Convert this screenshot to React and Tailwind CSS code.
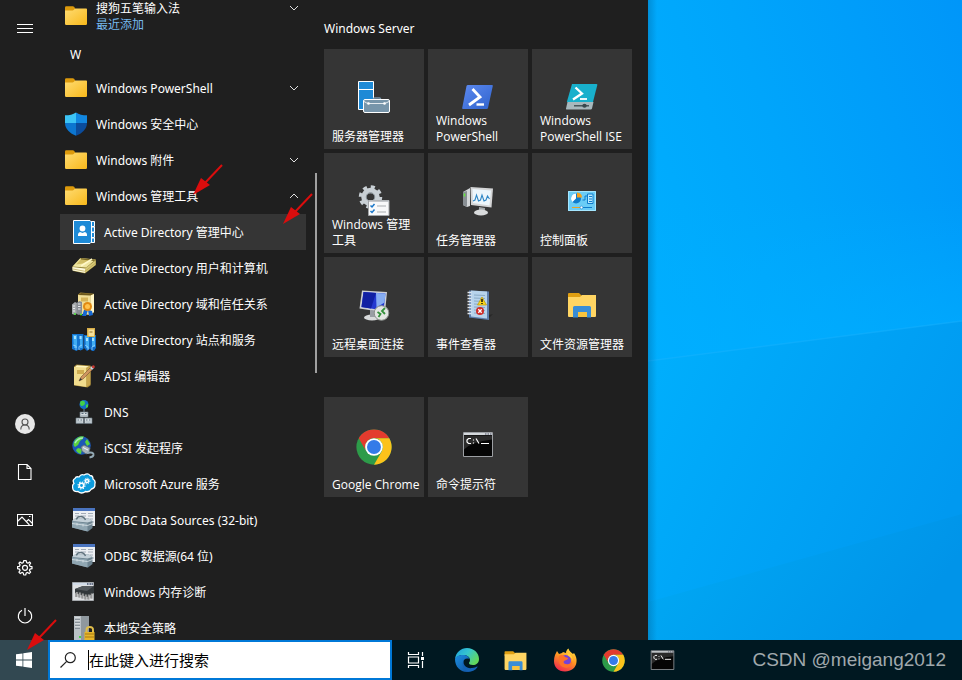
import React from "react";

const Svg = ({ size = 24, box = 24, children }) => (
  <svg width={size} height={size} viewBox={`0 0 ${box} ${box}`} aria-hidden="true" className="block shrink-0" fill="none">
    {children}
  </svg>
);

/* ---------- program list icons ---------- */

const Folder = () => (
  <Svg>
    <defs>
      <linearGradient id="folder" x1="0" y1="0" x2="1" y2="1">
        <stop offset="0" stopColor="#ffdc73" />
        <stop offset="1" stopColor="#f8b81a" />
      </linearGradient>
    </defs>
    <path d="M1 3.500q0-1.300 1.200-1.300h6.600q.8 0 1.300.6L11.500 5v3H1z" fill="#dd9a0c" />
    <path d="M1 6.500h7.500q.8 0 1.400-.7l1-1.100q.3-.3.900-.3h10.400q.8 0 .8.900v14.500q0 1.200-1.200 1.200H2.200Q1 21 1 19.800z" fill="url(#folder)" />
  </Svg>
);

const Shield = () => (
  <Svg>
    <path d="M12 0.500C9 2.500 5.500 3.300 1 3.300V11h11z" fill="#3cc4f5" />
    <path d="M12 0.500c3 2 6.500 2.800 11 2.800V11H12z" fill="#1287e0" />
    <path d="M1 11c0 6 5 10.500 11 12.700V11z" fill="#0c76d0" />
    <path d="M23 11c0 6-5 10.500-11 12.700V11z" fill="#0b4c9c" />
  </Svg>
);

const ContactBook = () => (
  <Svg>
    <path d="M19 1.500h3.500v5H19zM19 7h3.500v5H19zM19 12.500h3.500v5H19zM19 18h3.500v4.500H19z" fill="#1e8ad6" stroke="#fff" strokeWidth="1" />
    <path d="M1.500.5h16.500l1.500 1.500v20l-1.500 1.500H1.500z" fill="#1e8ad6" stroke="#fff" />
    <circle cx="10.500" cy="8.500" r="2.900" fill="#fff" />
    <path d="M6 16v-1.500q0-2 2-2.500l2.500 1 2.500-1q2 .5 2 2.500V16z" fill="#fff" />
  </Svg>
);

const FlatBook = () => (
  <Svg>
    <path d="M0 11 8 2.500 24 3.500v5.500L13 17.500 1 15z" fill="#8f7f34" />
    <path d="M.5 10.500 8.500 2 23.500 3.500l-9.500 8z" fill="#efe6a2" />
    <path d="M4 8.500 9 3l10 1-8 3.500z" fill="#d0bd67" />
    <path d="m8.500 2 15 1.500L22 5 9 3.400z" fill="#7b6a25" />
    <path d="m9 10 11-7" stroke="#fff8c9" strokeWidth="1.500" />
    <path d="M.5 11v3.500L13 17v-4.500z" fill="#fdf9dd" />
    <path d="M13 12.500 23.500 4.500V9L13 17z" fill="#d7c877" />
    <path d="m1 13 12 2.300 10-7.800" stroke="#b5a450" strokeWidth=".7" />
  </Svg>
);

const UprightBook = () => (
  <>
    <path d="M6 2.500 8.500.5 22 1.800V20l-2.500 3L6 21z" fill="#a58938" />
    <path d="M6 3h12.500v20L6 21.500z" fill="#f1df98" />
    <path d="M18.500 3 22 2v18l-3.500 3z" fill="#fff5c5" />
    <path d="M6.500 3 9 1l12 1-2.500 1.500z" fill="#6d581c" />
    <path d="M9 5.500h7v4H9z" fill="#d5b45a" />
  </>
);

const TrustBook = () => (
  <Svg>
    <UprightBook />
    <path d="m12 18 4 0-2 6h-4zM16 18l4 1 1 4-4 1z" fill="#1668d4" />
    <circle cx="15.500" cy="14.500" r="4.500" fill="#e28a12" />
    <circle cx="15.500" cy="14.500" r="2.500" fill="#ffc24e" />
    <path d="M0 12.500 3 10l2 1v10l-2 2-3-1z" fill="#a5a8ac" />
    <path d="M4.500 11 7.500 9 10 10v11.500L7 23l-2.500-1z" fill="#888c93" />
    <path d="M1 14h2M1 16.500h2M1 19h2M6 12h2.500M6 14.500h2.500M6 17h2.500" stroke="#e9ebed" />
    <path d="M2 22h2M8 22.500h2" stroke="#48e334" strokeWidth="1.500" />
  </Svg>
);

const Sites = () => (
  <Svg>
    <path d="M0 6h11.500v15l-3 1.500-2-1-2 1.500L0 21z" fill="#1474cf" />
    <path d="M12 7h12v13l-2 3h-2l-2-2-3 2-3-3z" fill="#0f69c4" />
    <path d="M1 7h4v13H2zM13 8h4v13l-3-1zM8 8h2.500v12H8zM20 9h3v10h-3z" fill="#41adf2" />
    <path d="M2 8h2v3H2zM7.500 8h2v3h-2zM14 10h2v3h-2zM20 10h2v3h-2z" fill="#a4e2ff" />
    <path d="m1 17 3 1v4M10 17l-3 1.500V22M13 17l3 2v3M23 17l-3 2v3" stroke="#9bd4ff" strokeWidth=".8" />
    <path d="M15 0h8v9h-8z" fill="#d8ae48" />
    <path d="M16.500 1.500H22V8h-5.500z" fill="#f7e19a" />
    <path d="M17.500 4h3" stroke="#92702a" />
  </Svg>
);

const AdsiEdit = () => (
  <Svg>
    <path d="M2 2.500 4.500.5 18.500 1.500v20l-3 2L2 21.500z" fill="#a18535" />
    <path d="M2 3h12.500v20L2 21z" fill="#f1dc8d" />
    <path d="M14.500 3 18.500 2v18.500L14.500 23z" fill="#c8a54c" />
    <path d="m3 3 2-1.800 12 1-2.500 1.300z" fill="#fff5c0" />
    <path d="M5 6h7v4H5z" fill="#d0ad51" />
    <path d="m7 17 2-4 9-9 2 2-9 9z" fill="#cf9660" stroke="#755034" strokeWidth=".6" />
    <path d="m7 17 1.500-3L10 15.500z" fill="#333" />
    <path d="m18 4 2 2 2-2-2-2z" fill="#c7d3df" />
    <circle cx="21.300" cy="2.700" r="1.500" fill="#c93a34" />
  </Svg>
);

const Dns = () => (
  <Svg>
    <circle cx="12" cy="4.500" r="4.500" fill="#146fc6" />
    <path d="M9 1q4-1 4 2t-4 3q-2-3 0-5M14 5l2-1v3l-2 1z" fill="#43cf48" />
    <path d="M12 9v3" stroke="#718d9d" />
    <path d="M8 12h8v5H8zM4 18h7.500v5.500H4zM12.500 18H20v5.500h-7.500z" fill="#d3dade" stroke="#65727c" strokeWidth=".7" />
    <path d="M9.500 13.500h2m1.500 0h1.500M5.500 20H7m1.500 0H10m4 0h1.500m1.500 0h1.500" stroke="#5d6f7e" strokeWidth="1.200" />
    <path d="M9 15.700h6M5 22h5.500m3 0H19" stroke="#9ba8b1" strokeWidth=".8" />
  </Svg>
);

const Iscsi = () => (
  <Svg>
    <circle cx="9.500" cy="9.500" r="9.300" fill="#1c58b7" />
    <path d="M3 4q4-5 9-3.500Q11 4 8 5L6 9 3 11q-3-2 0-7M6 12l4 1-1 5q-4-1-5-4zM15 3l3 5-3 2-2-4z" fill="#5bd23c" />
    <path d="M3 7q3-5 8-5" stroke="#c7f6f3" strokeWidth="1.500" opacity=".7" />
    <path d="m9 11 3-2 6 3-1 5-3 1-4-3z" fill="#a7b4bd" stroke="#58646c" strokeWidth=".7" />
    <path d="M11 11.500 16 14" stroke="#f4f7fa" />
    <path d="M15 17q7-1.500 6.500 2-.5 2-4 2.500" stroke="#93a9b4" strokeWidth="2" />
  </Svg>
);

const Azure = () => (
  <Svg>
    <path d="M6 19.500q-5 .5-5.300-3.500Q0 13 2 11.500 0 8 3 6.500 4 4 7 5q2-3.500 5-2 4-2.500 6 .5 3 0 3 3.500 3 2 1.800 5 .7 4-3.300 5-2 3.500-6 2.500-4 3-7.500 0z" fill="#0c9bdc" stroke="#fff" strokeWidth="1.300" />
    <circle cx="9.500" cy="13.500" r="2.200" stroke="#fff" strokeWidth="1.600" />
    <circle cx="9.500" cy="13.500" r="3.500" stroke="#fff" strokeWidth="1.100" strokeDasharray="1.400 1.350" />
    <circle cx="15" cy="9" r="1.600" stroke="#fff" strokeWidth="1.500" />
    <circle cx="15" cy="9" r="2.800" stroke="#fff" strokeWidth="1" strokeDasharray="1.200 1" />
  </Svg>
);

const Odbc = () => (
  <Svg>
    <path d="M1 0h22v18H1z" fill="#eceff3" />
    <path d="M1 0h22v3H1z" fill="#4a74bf" />
    <path d="M3 5.500h4m2 0h5m2 0h5M3 8h4m2 0h5m2 0h5M18 11h3M20 14h2" stroke="#a3acb8" />
    <path d="m0 13 3-2.500h14l3.500 2.500v7L16 23.500 0 19.500z" fill="#6d8390" />
    <path d="m0 13 3-2.500h14l3.500 2.500-5 1.500z" fill="#c3d0d8" />
    <path d="M0 13.500 15.500 15.500v8L0 19.500z" fill="#90a6b2" />
    <path d="M4.500 11.500q.5-3 4-3t5 3.500" stroke="#5f727d" strokeWidth="1.400" />
    <path d="m0 15.500 15.500 2 5-2M5 15v2.500m6-1.500v2.500" stroke="#dbe3e8" strokeWidth=".8" />
  </Svg>
);

const Memory = () => (
  <Svg>
    <path d="M.5 2.500h21v18H.5z" fill="#dfe1e3" stroke="#a5a9ad" />
    <path d="M1 3h20v2H1z" fill="#d2dce9" />
    <path d="M15 4h1.500m1 0H19m.5 0H21" stroke="#48516a" strokeWidth="1.500" />
    <path d="m3 9 8-3h11v7l-7 4-12-4z" fill="#33383b" />
    <path d="m3 9 8-3h11l-7 5z" fill="#54595d" />
    <path d="M4.500 12v5m3-4.500v5m3-4v5m3-4v5m3-5v5m3-6v5" stroke="#666" strokeWidth="2" />
    <path d="M5 12v5m3-4.500v5m3-4v5m3-4v5m3-5v5m3-6v5" stroke="#f6f6f6" strokeWidth=".7" />
  </Svg>
);

const Security = () => (
  <Svg>
    <path d="M2 0h11v24H2z" fill="#bac1c6" />
    <path d="M9 0h8v22l-5 2H9z" fill="#8f989e" />
    <path d="M3 3h5M3 6h5M3 9h5M3 12h5" stroke="#59646c" />
    <path d="M3 2h5M3 5h5M3 8h5M3 11h5" stroke="#fff" strokeWidth=".8" />
    <path d="M7 21h2" stroke="#48d447" strokeWidth="2" />
    <path d="M14.500 16v-2q0-3 3.300-3t3.200 3v2" stroke="#dfbd4a" strokeWidth="2" />
    <path d="M12.500 16h10v8h-10z" fill="#e7b62a" />
    <path d="M13 18h9M13 21h9" stroke="#a97b13" />
  </Svg>
);

/* ---------- tile icons ---------- */

const ServerManager = () => (
  <Svg size={32} box={32}>
    <path d="M.5.5h15v28H.5z" fill="#1e8ad6" stroke="#fff" />
    <path d="M1 8.500h14" stroke="#fff" />
    <path d="M15.500 19v-1q0-1 1-1h5q1 0 1 1v1" stroke="#7795aa" strokeWidth="1.500" />
    <rect x="5.500" y="18.500" width="26" height="13" rx="1.500" fill="#7795aa" stroke="#fff" />
    <path d="M6 20.500q3 2 5 2h14q3 0 6-2" stroke="#fff" strokeWidth=".8" />
    <circle cx="10.500" cy="22.500" r="1.300" fill="#fff" />
    <circle cx="26.500" cy="22.500" r="1.300" fill="#fff" />
  </Svg>
);

const PowerShell = () => (
  <Svg size={32} box={32}>
    <defs>
      <linearGradient id="psBlue" x1="0" y1="0" x2="1" y2="1">
        <stop offset="0" stopColor="#5d8af0" />
        <stop offset="1" stopColor="#2f62cc" />
      </linearGradient>
    </defs>
    <path d="M6 4h24q1 0 .8 1L26 27q-.3 1-1.300 1H1q-1 0-.8-1L4.500 5Q4.800 4 6 4z" fill="url(#psBlue)" />
    <path d="m10.500 8 7.500 8-11 8" stroke="#fff" strokeWidth="2.800" />
    <path d="M14.500 23.500H22" stroke="#fff" strokeWidth="2.400" />
  </Svg>
);

const PowerShellIse = () => (
  <Svg size={32} box={32}>
    <path d="M6 3h24.500q1 0 .8 1L27 21H.8z" fill="#18b0cc" />
    <path d="M1.500 21H27.500l-1.500 6.500q-.3 1-1.300 1H1q-1.200 0-1-1z" fill="#a7b8bd" />
    <path d="m9.500 6.500 6.500 6L7 18.500" stroke="#fff" strokeWidth="2.300" />
    <path d="M14 18h7" stroke="#fff" strokeWidth="1.800" />
    <path d="M8 24.800h15" stroke="#37474c" strokeWidth="1.300" />
    <ellipse cx="18.500" cy="24.800" rx="2.200" ry="2" fill="#37474c" />
  </Svg>
);

const AdminTools = () => (
  <Svg size={32} box={32}>
    <g stroke="#c9d0d5">
      <circle cx="12.500" cy="12" r="6.500" strokeWidth="5.500" />
      <circle cx="12.500" cy="12" r="10" strokeWidth="3.500" strokeDasharray="4 3.850" />
    </g>
    <circle cx="12.500" cy="12" r="4.200" stroke="#7d868c" />
    <path d="M10.500 15.500h20.500v15H10.500z" fill="#f8f9fa" stroke="#a2a5a8" />
    <path d="M11 15.500h20v1.500H11z" fill="#c5c8cc" />
    <path d="m12.500 20.500 1.500 1.500 2.500-3M12.500 26l1.500 1.500 2.500-3" stroke="#1976c8" strokeWidth="1.500" />
    <path d="M19 21h9M19 27h9" stroke="#a8acaf" />
  </Svg>
);

const TaskManager = () => (
  <Svg size={32} box={32}>
    <path d="m1 7 7-4v18l-3 1-4-2z" fill="#d3d6d8" />
    <path d="M1 7 5 6v16l-4-2z" fill="#888e93" />
    <path d="M2.500 8.500v3" stroke="#63e635" strokeWidth="1.500" />
    <path d="m8.500 2 22.500 1.500-1.500 19L9 20z" fill="#d4d5d6" />
    <path d="m10.500 4 18.500 1.500-1.500 15-16.500-2.500z" fill="#edf6fb" />
    <path d="m11 16 2-1 1.500-5 2 6 2-1 1.500-5 2 6 2-1 1.500-4 2 3" stroke="#2f86c4" strokeWidth="1.100" />
    <path d="m17 22 6 1v4h-6z" fill="#a0a4a6" />
    <ellipse cx="19" cy="27.500" rx="7" ry="3" fill="#d9dbdc" />
  </Svg>
);

const ControlPanel = () => (
  <Svg size={32} box={32}>
    <path d="M2 6h28v20H2z" fill="#6accf6" />
    <path d="M2.500 6.500h27v19h-27z" stroke="#a5e6ff" />
    <circle cx="10" cy="13.500" r="5" fill="#0f7ccc" />
    <path d="M10 13.500 6.500 17A5 5 0 0 1 10 8.500z" fill="#fff" />
    <path d="M11 7.500q5 .5 5 5h-5z" fill="#f6a11c" />
    <path d="M16.500 15H19v-4h2" stroke="#0f7ccc" />
    <path d="M21.500 9h5.500v9.500h-5.500z" fill="#b8eaff" stroke="#0f7ccc" />
    <path d="M23 11.500h3m-3 2.500h3m-3 2.500h3" stroke="#0f7ccc" />
    <path d="M6 22.500h9" stroke="#e7a428" />
    <path d="M16 22.500h10" stroke="#0f7ccc" />
    <circle cx="15.500" cy="22.500" r="1.400" fill="#fff" stroke="#0f7ccc" strokeWidth=".6" />
  </Svg>
);

const RemoteDesktop = () => (
  <Svg size={32} box={32}>
    <ellipse cx="14" cy="28.500" rx="8" ry="3" fill="#d8dadb" />
    <path d="m12 21 6 1-1 6h-5z" fill="#999ea4" />
    <path d="M4 1.500 29 3l-2 20.500L1.500 19.500z" fill="#cdd0d6" />
    <path d="M5.500 3 27.500 4.500l-2 17L3.500 18z" fill="#2439d0" />
    <path d="M5.500 3 18 4l-5 15.500L3.500 18z" fill="#1120a3" />
    <path d="m18 4 9.500.5-1 9-8 5z" fill="#86adf3" />
    <circle cx="23.500" cy="24" r="7.300" fill="#e3e6e3" stroke="#8b908d" />
    <path d="m19.500 23 3 2-2 3M27 19l-3 3 3 3" stroke="#33903a" strokeWidth="1.800" />
  </Svg>
);

const EventViewer = () => (
  <Svg size={32} box={32}>
    <path d="m23 27 8-2-4 4-12 2z" fill="#272727" />
    <path d="m7 1.500 20 1v28.500L7 28.500z" fill="#5e7fae" />
    <path d="m9 1.500 16 1v27L9 27.500z" fill="#b7d3ec" />
    <path d="m12 6 11 .5M12 9l11 .5M12 12l11 .5M12 15l11 .5M12 18l11 .5M12 21l11 .5M12 24l11 .5" stroke="#89aac6" />
    <path d="M5.500 3.500h4m-4 3h4m-4 3h4m-4 3h4m-4 3h4m-4 3h4m-4 3h4m-4 3h4" stroke="#e1e6eb" strokeWidth="1.300" />
    <path d="m20 8 4.500 8h-9z" fill="#f9d51b" stroke="#c29a00" strokeWidth=".7" />
    <path d="M20 10v3m0 1v1" stroke="#111" strokeWidth="1.500" />
    <circle cx="18" cy="22" r="4" fill="#cf2c28" />
    <path d="m16.300 20.300 3.400 3.400m0-3.400-3.400 3.400" stroke="#fff" strokeWidth="1.300" />
  </Svg>
);

const Explorer = ({ size = 32 }) => (
  <Svg size={size} box={32}>
    <path d="M2 5q0-1 1-1h10l3 3v3H2z" fill="#e09f12" />
    <path d="M2 8h12l2-2h14v21q0 1-1 1H3q-1 0-1-1z" fill="#ffd563" />
    <path d="M7 28.500V18.500Q7 17 8.500 17h15q1.500 0 1.500 1.500v10h-4V23h-9v5.500z" fill="#398dd6" />
    <path d="M12 23h9v5h-9z" fill="#f7c33e" />
  </Svg>
);

const Chrome = ({ size = 36 }) => (
  <Svg size={size} box={48}>
    <circle cx="24" cy="24" r="23.500" fill="#2d9b49" />
    <path d="M3.650 12.250A23.500 23.500 0 0 1 44.350 12.250H24A11.750 11.750 0 0 0 13.800 29.900z" fill="#e33b2e" />
    <path d="M44.350 12.250A23.500 23.500 0 0 1 24 47.500L34.200 29.900A11.750 11.750 0 0 0 24 12.250z" fill="#fcc21b" />
    <circle cx="24" cy="24" r="11.800" fill="#fff" />
    <circle cx="24" cy="24" r="9.300" fill="#347be8" />
  </Svg>
);

const Terminal = ({ size = 32 }) => (
  <Svg size={size} box={32}>
    <path d="M1.500 3.500h29v24h-29z" fill="#050505" stroke="#9c9fa3" />
    <path d="M2 4h28v2H2z" fill="#d4d8dc" />
    <path d="M23 5h1.500m1 0H27m1 0h1.500" stroke="#4a4c60" />
    <path d="M2 6.500h28v4Q10 12.500 2 20.500z" fill="#fff" opacity=".15" />
    <path d="M9 9.500H6.500L5 11v2l1.500 1.500H9m2.500-4v1m0 2v1m2.500-5 3 5m2 0h8" stroke="#fff" strokeWidth="1.200" />
  </Svg>
);

/* ---------- taskbar icons ---------- */

const Edge = () => (
  <Svg>
    <defs>
      <linearGradient id="edgeTop" x1="0" y1="0" x2="1" y2=".6">
        <stop offset="0" stopColor="#1ca0df" />
        <stop offset=".5" stopColor="#36c5cf" />
        <stop offset="1" stopColor="#62d85a" />
      </linearGradient>
      <linearGradient id="edgeLow" x1="0" y1="0" x2="1" y2="1">
        <stop offset="0" stopColor="#1b8ee0" />
        <stop offset="1" stopColor="#104d9c" />
      </linearGradient>
    </defs>
    <path d="M0 11C1 4 6 0 12 0c7 0 12 5 12 11 0 4-3 6-6 6-3 0-4-1-4-2 0-1 1-1 1-3 0-3-3-5-7-5-4 0-7 2-8 4z" fill="url(#edgeTop)" />
    <path d="M0 11c1-3 4-4 8-4 4 0 6 2 6.500 4C11 9.500 8 12 8 15c0 5 5 8 10 7-2 1.500-4 2-6 2C5 24 0 18.500 0 11z" fill="url(#edgeLow)" />
    <path d="M9 12c-2 5 3 9 8 8 2 0 4-1 5-1.500.6-.2.800.1.500.5C20 23 16 24 14 23.500 8 22.500 6 16 9 12z" fill="#1462b5" />
  </Svg>
);

const Firefox = () => (
  <Svg>
    <defs>
      <linearGradient id="fox" x1=".8" y1="0" x2=".3" y2="1">
        <stop offset="0" stopColor="#ffe344" />
        <stop offset=".45" stopColor="#ff9822" />
        <stop offset="1" stopColor="#f0284e" />
      </linearGradient>
    </defs>
    <path d="M2 7 4 3l2 3 3-1 1-1 3 1c0-2 1-3.500 2.500-4.500C16 3 18 4 20 6l1-1c2 3 3 6 2.500 9C23 20 18 23.500 12 23.500 5 23.500 1 19 1 13c0-2 .3-4 1-6z" fill="url(#fox)" />
    <circle cx="12.500" cy="12.500" r="5.500" fill="#7542d8" />
    <path d="M6 8c2-2 5-1 6 1l3 1c0 2-3 2-4 3s0 3 2 3c3 1 5-1 6-3 0 6-5 8-9 6-3-1-5-5-4-11z" fill="#ff7128" />
    <path d="M14 5c4 1 6 4 5.500 8-.5-3-2-4-4-5z" fill="#ffcf3d" />
  </Svg>
);

const TaskView = () => (
  <Svg size={20} box={20}>
    <path d="M2.500 2v2.500h10V2M2.500 18v-2.500h10V18M2.500 7h10v6h-10zM16.500 2v4m0 5v7" stroke="#fff" strokeWidth="1.200" />
    <path d="M15 7h3v3h-3z" fill="#fff" />
  </Svg>
);

const WindowsLogo = () => (
  <Svg size={16} box={16}>
    <path d="M0 2.300 6.500 1.400v6.100H0zM7.300 1.300 16 0v7.500H7.300zM0 8.400h6.500v6.200L0 13.700zM7.300 8.400H16V16l-8.700-1.300z" fill="#fff" />
  </Svg>
);

/* ---------- rail icons ---------- */

const Menu = () => (
  <Svg size={16} box={16}>
    <path d="M0 4.500h16M0 8.500h16M0 12.500h16" stroke="#fff" />
  </Svg>
);

const User = () => (
  <Svg size={20} box={20}>
    <circle cx="10" cy="10" r="10" fill="#e6e6e6" />
    <circle cx="10" cy="8" r="3" stroke="#555" strokeWidth="1.100" />
    <path d="M5.800 15.500q0-4.500 4.200-4.500t4.200 4.500" stroke="#555" strokeWidth="1.100" />
  </Svg>
);

const Doc = () => (
  <Svg size={16} box={16}>
    <path d="M1.500.5h8.500l4 4v11H1.500zM10 .5v4h4" stroke="#fff" strokeWidth="1.100" />
  </Svg>
);

const Picture = () => (
  <Svg size={16} box={16}>
    <path d="M.5 2.500h15v11H.5zM1 9l4-4 7.500 8M9.500 9.500l2-2 4 4" stroke="#fff" strokeWidth="1.100" />
    <path d="M12 4.500h1.500" stroke="#fff" />
  </Svg>
);

const Gear = () => (
  <Svg size={16} box={16}>
    <path
      d="m6.700.6-.5 2-1.300.6L3.100 2 1.900 3.200l1.200 1.700-.6 1.400-2 .4v2l2 .4.600 1.400-1.200 1.700 1.400 1.400 1.700-1.200 1.300.6.400 2h2l.5-2 1.300-.6 1.700 1.200 1.400-1.400-1.200-1.700.6-1.400 2-.4v-2l-2-.4-.6-1.400 1.200-1.700L12.700 2 11 3.200l-1.300-.6-.5-2z"
      stroke="#fff"
      strokeWidth="1.200"
      strokeLinejoin="round"
    />
    <circle cx="8" cy="7.800" r="2.500" stroke="#fff" strokeWidth="1.200" />
  </Svg>
);

const Power = () => (
  <Svg size={16} box={16}>
    <path d="M5 2.300a6.700 6.700 0 1 0 6 0M8 0v8" stroke="#fff" strokeWidth="1.200" />
  </Svg>
);

const Chevron = ({ up }) => (
  <Svg size={8} box={8}>
    <path d={up ? "M0 6 4 2l4 4" : "M0 2l4 4 4-4"} stroke="#e0e0e0" />
  </Svg>
);

const Arrow = () => (
  <svg width="32" height="36" viewBox="0 0 32 36" fill="none" aria-hidden="true" className="block">
    <path d="M30 2 12 21" stroke="#db0d0d" strokeWidth="2" />
    <path d="m1 32 8-17 9 7z" fill="#db0d0d" />
  </svg>
);

/* ---------- data ---------- */

const rail = [
  { name: "用户", icon: <User /> },
  { name: "文档", icon: <Doc /> },
  { name: "图片", icon: <Picture /> },
  { name: "设置", icon: <Gear /> },
  { name: "电源", icon: <Power /> },
];

const groups = [
  { name: "Windows PowerShell", icon: <Folder />, chevron: "down" },
  { name: "Windows 安全中心", icon: <Shield /> },
  { name: "Windows 附件", icon: <Folder />, chevron: "down" },
  { name: "Windows 管理工具", icon: <Folder />, chevron: "up" },
];

const tools = [
  { name: "Active Directory 管理中心", icon: <ContactBook />, active: true },
  { name: "Active Directory 用户和计算机", icon: <FlatBook /> },
  { name: "Active Directory 域和信任关系", icon: <TrustBook /> },
  { name: "Active Directory 站点和服务", icon: <Sites /> },
  { name: "ADSI 编辑器", icon: <AdsiEdit /> },
  { name: "DNS", icon: <Dns /> },
  { name: "iSCSI 发起程序", icon: <Iscsi /> },
  { name: "Microsoft Azure 服务", icon: <Azure /> },
  { name: "ODBC Data Sources (32-bit)", icon: <Odbc /> },
  { name: "ODBC 数据源(64 位)", icon: <Odbc /> },
  { name: "Windows 内存诊断", icon: <Memory /> },
  { name: "本地安全策略", icon: <Security /> },
];

const serverTiles = [
  { name: "服务器管理器", icon: <ServerManager /> },
  { name: "Windows\nPowerShell", icon: <PowerShell /> },
  { name: "Windows\nPowerShell ISE", icon: <PowerShellIse /> },
  { name: "Windows 管理\n工具", icon: <AdminTools /> },
  { name: "任务管理器", icon: <TaskManager /> },
  { name: "控制面板", icon: <ControlPanel /> },
  { name: "远程桌面连接", icon: <RemoteDesktop /> },
  { name: "事件查看器", icon: <EventViewer /> },
  { name: "文件资源管理器", icon: <Explorer /> },
];

const moreTiles = [
  { name: "Google Chrome", icon: <Chrome />, large: true },
  { name: "命令提示符", icon: <Terminal /> },
];

const pinned = [
  { name: "Microsoft Edge", icon: <Edge /> },
  { name: "文件资源管理器", icon: <Explorer size={25} /> },
  { name: "Firefox", icon: <Firefox /> },
  { name: "Google Chrome", icon: <Chrome size={23} /> },
  { name: "命令提示符", icon: <Terminal size={25} /> },
];

/* ---------- parts ---------- */

const TileGrid = ({ tiles }) => (
  <div className="grid grid-cols-[repeat(3,100px)] gap-1">
    {tiles.map((t) => (
      <button key={t.name} className="grid h-[100px] bg-[#353535] text-left">
        <span className={`col-start-1 row-start-1 place-self-center ${t.large ? "" : "pb-1"}`}>{t.icon}</span>
        <span className="col-start-1 row-start-1 self-end whitespace-pre pb-1 pl-2 leading-4">{t.name}</span>
      </button>
    ))}
  </div>
);

const Wallpaper = () => (
  <svg viewBox="0 0 314 640" preserveAspectRatio="none" aria-hidden="true" className="block h-full w-full">
    <defs>
      <linearGradient id="sky" x1="0" y1=".7" x2="1" y2="0">
        <stop offset="0" stopColor="#00b1ff" />
        <stop offset=".5" stopColor="#00a5fb" />
        <stop offset="1" stopColor="#0096f9" />
      </linearGradient>
      <linearGradient id="beam" x1="0" y1="0" x2="1" y2=".5">
        <stop offset="0" stopColor="#00b0fd" />
        <stop offset="1" stopColor="#0099f0" />
      </linearGradient>
      <linearGradient id="glow" x1="0" y1="0" x2="0" y2="1">
        <stop offset="0" stopColor="#00aeff" stopOpacity="0" />
        <stop offset="1" stopColor="#00aeff" stopOpacity=".7" />
      </linearGradient>
      <linearGradient id="base" x1="0" y1="0" x2="1" y2=".3">
        <stop offset="0" stopColor="#00abf5" />
        <stop offset="1" stopColor="#0094e9" />
      </linearGradient>
      <linearGradient id="edgeShade" x1="0" y1="0" x2="1" y2="0">
        <stop offset="0" stopColor="#003a66" stopOpacity=".25" />
        <stop offset="1" stopColor="#003a66" stopOpacity="0" />
      </linearGradient>
    </defs>
    <path d="M0 0h314v640H0z" fill="url(#sky)" />
    <path d="M0 200h314v121L0 361z" fill="url(#glow)" />
    <path d="M0 361 314 321v319H0z" fill="url(#beam)" />
    <path d="M0 361 314 321" stroke="#1bb4ff" strokeWidth="1.500" opacity=".45" />
    <path d="M0 602 314 514v126H0z" fill="url(#base)" />
    <path d="M0 0h9v640H0z" fill="url(#edgeShade)" />
  </svg>
);

export default function App() {
  return (
    <div className="relative flex h-screen flex-col overflow-hidden bg-[#1f1f1f] font-['Open_Sans','Noto_Sans_CJK_SC',sans-serif] text-xs text-white">
      <div className="flex min-h-0 flex-1">
        <nav className="flex w-[50px] shrink-0 flex-col pt-1" aria-label="开始">
          <button className="mb-auto grid h-12 place-items-center" aria-label="展开">
            <Menu />
          </button>
          {rail.map((r) => (
            <button key={r.name} className="grid h-12 place-items-center" aria-label={r.name}>
              {r.icon}
            </button>
          ))}
        </nav>

        <div className="ml-2.5 w-[246px] shrink-0 overflow-hidden font-['Noto_Sans','Noto_Sans_CJK_SC',sans-serif]">
          <button className="-mt-0.5 flex h-9 w-full items-center gap-2 pl-1 pr-2 text-left">
            <Folder />
            <span className="flex-1 pt-0.5 leading-4">
              搜狗五笔输入法
              <span className="block text-[#76b9ed]">最近添加</span>
            </span>
            <span className="self-start pt-1.5">
              <Chevron />
            </span>
          </button>
          <h2 className="flex h-9 items-center pb-0.5 pl-2.5 pt-2">W</h2>
          <ul>
            {groups.map((g) => (
              <li key={g.name}>
                <button className="flex h-9 w-full items-center gap-2 pl-1 pr-2 text-left">
                  {g.icon}
                  <span className="flex-1 pt-0.5">{g.name}</span>
                  {g.chevron && <Chevron up={g.chevron === "up"} />}
                </button>
              </li>
            ))}
            {tools.map((t) => (
              <li key={t.name}>
                <button className={`flex h-9 w-full items-center gap-2 pl-3 text-left ${t.active ? "bg-[#353535]" : ""}`}>
                  {t.icon}
                  <span className="pt-0.5">{t.name}</span>
                </button>
              </li>
            ))}
          </ul>
        </div>
        <div className="ml-[9px] mt-[173px] h-[200px] w-0.5 shrink-0 bg-[#a0a0a0]" />

        <main className="ml-[7px] shrink-0 pr-4 pt-[21px]">
          <h2 className="mb-3 font-['Noto_Sans','Noto_Sans_CJK_SC',sans-serif] leading-4">Windows Server</h2>
          <TileGrid tiles={serverTiles} />
          <div className="h-10" />
          <TileGrid tiles={moreTiles} />
        </main>

        <div className="min-w-0 flex-1">
          <Wallpaper />
        </div>
      </div>

      <footer className="flex h-10 shrink-0 items-stretch bg-[#001821]">
        <button className="grid w-12 shrink-0 place-items-center bg-[#324851]" aria-label="开始">
          <WindowsLogo />
        </button>
        <label className="flex w-[344px] shrink-0 items-center border-2 border-[#0078d7] bg-white pl-2.5">
          <Svg size={16} box={16}>
            <circle cx="10.300" cy="5.700" r="5" stroke="#222" strokeWidth="1.200" />
            <path d="M6.700 9.300.5 15.500" stroke="#222" strokeWidth="1.200" />
          </Svg>
          <span className="ml-3 h-5 w-px bg-black" />
          <input
            type="text"
            aria-label="搜索"
            placeholder="在此键入进行搜索"
            className="min-w-0 flex-1 bg-transparent text-[15px] text-black outline-none placeholder:text-black"
          />
        </label>
        <button className="mr-0.5 grid w-12 place-items-center" aria-label="任务视图">
          <TaskView />
        </button>
        {pinned.map((p) => (
          <button key={p.name} className="grid w-[49px] place-items-center" aria-label={p.name}>
            {p.icon}
          </button>
        ))}
        <p className="ml-auto self-center pr-4 font-['Liberation_Sans',sans-serif] text-[19px] leading-6 text-[#a0a9ad]">CSDN @meigang2012</p>
      </footer>

      <div className="absolute left-[192px] top-[163px]">
        <Arrow />
      </div>
      <div className="absolute left-[282px] top-[192px]">
        <Arrow />
      </div>
      <div className="absolute bottom-[26px] left-[26px]">
        <Arrow />
      </div>
    </div>
  );
}
